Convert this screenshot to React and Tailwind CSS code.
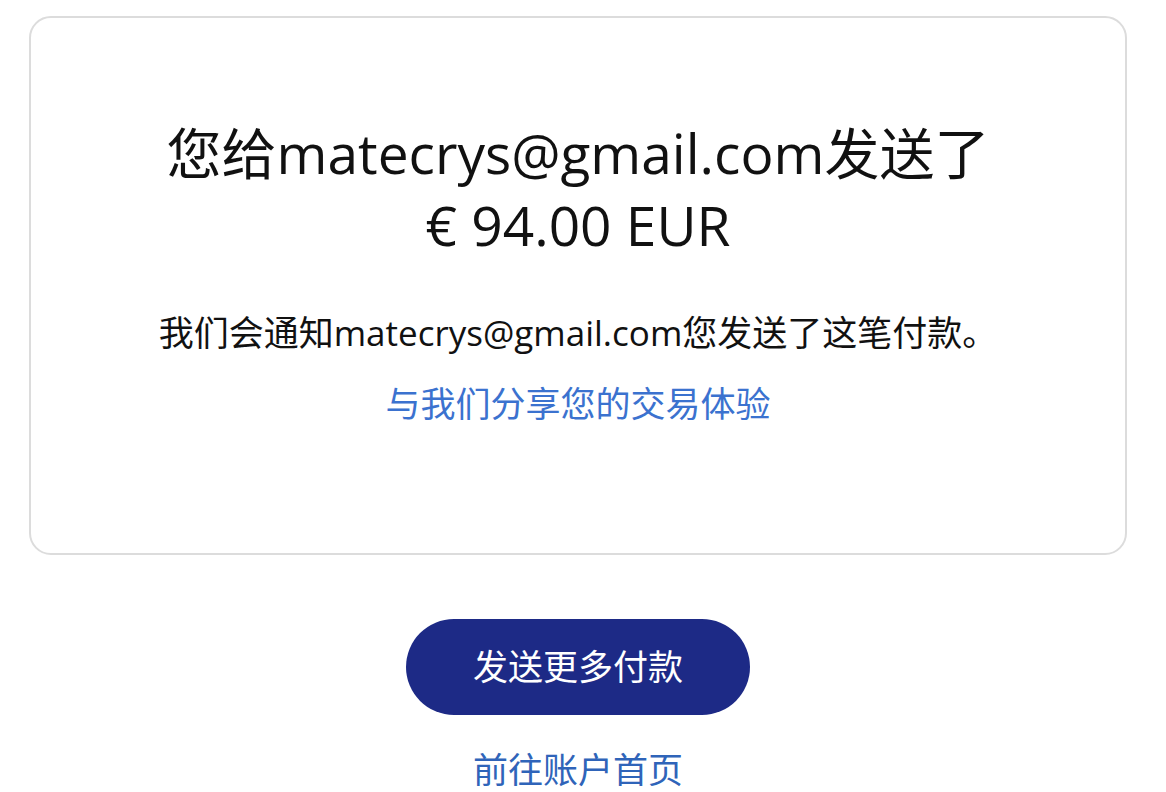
export default function App() {
  const font = { fontFamily: '"Open Sans", "Noto Sans CJK SC", sans-serif' }
  return (
    <div className="min-h-[792px] w-[1156px] bg-white pt-4" style={font}>
      <div className="mx-[29px] flex h-[539px] flex-col items-center rounded-[22px] border-2 border-[#dcdcdc] pt-[99px]">
        <h1 className="text-center text-[55px] leading-[72px] font-normal text-[#111]">
          您给matecrys@gmail.com发送了
          <br />€ 94.00 EUR
        </h1>
        <p className="mt-[50px] text-[35px] leading-[44px] text-[#111]">
          我们会通知matecrys@gmail.com您发送了这笔付款。
        </p>
        <a href="#" className="mt-[27px] text-[35px] leading-[44px] text-[#3b72cf]">
          与我们分享您的交易体验
        </a>
      </div>
      <div className="mt-[64px] flex flex-col items-center">
        <button
          type="button"
          className="flex h-[96px] w-[344px] items-center justify-center rounded-full bg-[#1d2a86] text-[35px] text-white"
        >
          发送更多付款
        </button>
        <a href="#" className="mt-[33px] text-[35px] leading-[44px] text-[#2f64b9]">
          前往账户首页
        </a>
      </div>
    </div>
  )
}
